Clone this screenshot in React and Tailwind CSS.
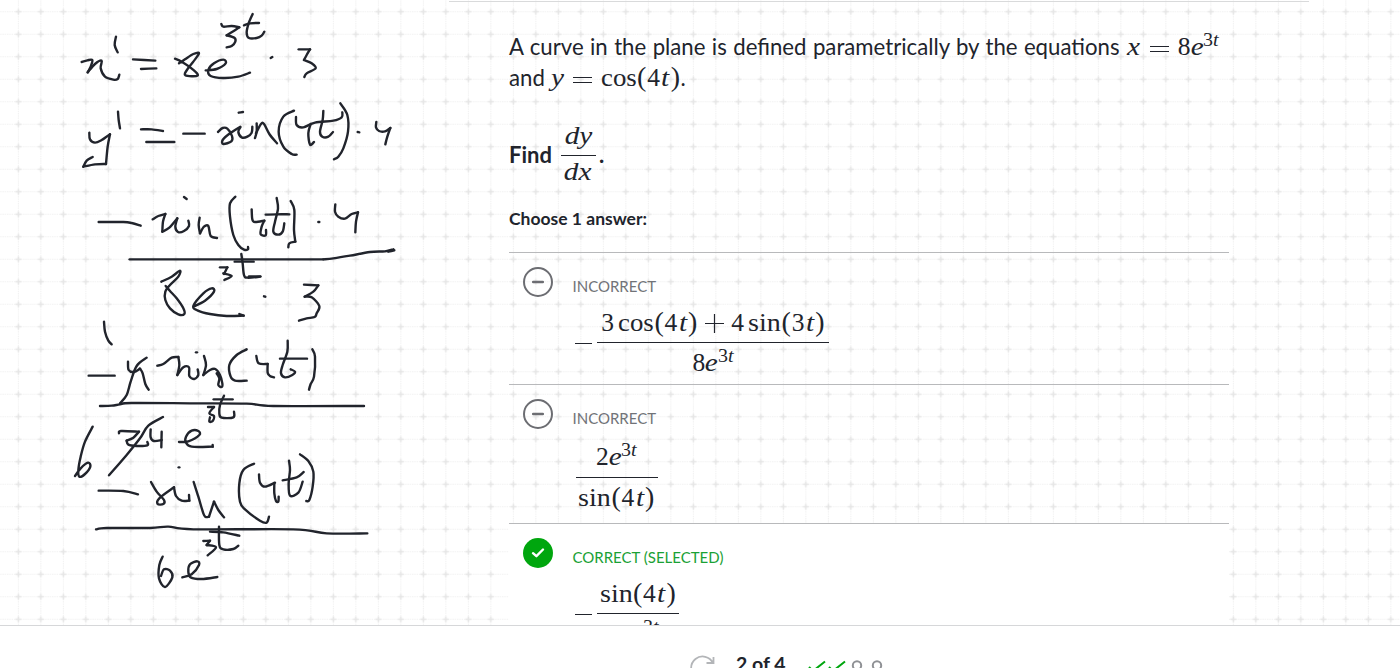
import React from "react";

// Turns a flat list of coordinates into a smooth path through all of them.
function smooth(p) {
  const n = p.length / 2;
  const at = (i) => {
    const k = Math.max(0, Math.min(n - 1, i));
    return [p[2 * k], p[2 * k + 1]];
  };
  let d = `M${p[0]} ${p[1]}`;
  for (let i = 0; i < n - 1; i++) {
    const [a, b, c, e] = [at(i - 1), at(i), at(i + 1), at(i + 2)];
    d += `C${b[0] + (c[0] - a[0]) / 6} ${b[1] + (c[1] - a[1]) / 6} ${c[0] - (e[0] - b[0]) / 6} ${c[1] - (e[1] - b[1]) / 6} ${c[0]} ${c[1]}`;
  }
  return d;
}

// Pen strokes, three units to a pixel; each group has its own vertical offset.
const ink = [
  {
    y: 0,
    strokes: [
      [65, 186, 82, 181, 97, 180, 92, 200, 83, 217],
      [83, 217, 105, 192, 125, 182, 122, 205, 135, 230, 160, 239, 173, 237, 178, 224],
      [168, 110, 164, 135, 173, 157],
      [219, 178, 286, 182],
      [243, 207, 289, 205],
      [345, 176, 365, 185, 398, 208, 413, 227, 376, 226, 382, 208, 400, 185, 417, 160, 400, 162, 375, 178, 357, 190],
      [437, 211, 470, 207, 497, 190, 490, 179, 462, 190, 445, 210, 452, 228, 490, 234, 535, 230, 570, 218],
      [484, 72, 490, 80, 515, 78, 538, 82],
      [538, 82, 520, 94, 500, 106],
      [500, 106, 523, 113, 526, 125, 515, 138, 500, 142],
      [578, 42, 566, 70, 560, 98, 567, 114, 590, 114, 605, 107, 613, 95],
      [552, 76, 570, 70, 597, 69],
      [632, 174, 637, 171],
      [716, 148, 750, 148],
      [750, 148, 740, 165, 732, 180],
      [732, 180, 755, 190, 767, 205, 740, 220, 733, 231],
      [88, 398, 90, 418, 105, 428, 125, 420, 150, 403],
      [150, 403, 143, 440, 138, 492],
      [138, 492, 105, 493, 70, 500],
      [70, 500, 80, 482, 98, 471],
      [174, 335, 176, 360, 180, 385],
      [243, 388, 275, 388, 309, 393],
      [259, 426, 343, 426],
      [370, 401, 434, 401],
      [474, 396, 488, 384, 502, 386, 516, 408, 514, 424, 490, 432, 488, 420, 510, 400, 541, 380],
      [541, 382, 535, 396, 545, 412, 562, 410, 575, 398, 577, 380],
      [536, 338, 549, 336],
      [585, 414, 590, 395, 590, 370],
      [588, 400, 603, 372, 612, 372, 628, 402, 651, 430],
      [702, 332, 670, 350, 656, 395, 670, 440, 695, 462, 710, 464],
      [708, 351, 710, 375, 730, 382, 765, 368, 820, 362, 845, 352, 847, 337],
      [752, 372, 745, 400, 750, 434, 762, 426],
      [790, 333, 788, 360, 780, 395, 787, 410, 805, 410, 819, 396],
      [841, 310, 862, 345, 864, 395, 850, 445, 835, 470, 822, 478],
      [893, 396, 898, 397],
      [949, 366, 948, 382, 957, 393, 975, 394, 991, 384],
      [991, 384, 982, 410, 976, 433],
    ],
  },
  {
    y: 180,
    strokes: [
      [116, 126, 190, 126, 215, 129, 242, 137],
      [278, 118, 295, 108, 316, 102],
      [316, 102, 309, 125, 307, 155],
      [307, 155, 328, 143, 352, 115],
      [352, 115, 346, 140, 354, 156, 372, 153, 387, 138, 385, 122],
      [372, 51, 380, 57],
      [419, 113, 416, 135, 420, 160],
      [420, 160, 432, 140, 445, 138, 452, 168, 471, 174],
      [526, 50, 510, 70, 510, 110, 520, 165, 535, 195, 552, 209, 564, 208, 564, 201],
      [575, 88, 577, 118, 585, 126, 613, 122],
      [613, 122, 605, 140, 602, 163, 617, 166, 618, 150],
      [650, 54, 654, 85, 645, 125, 640, 155, 655, 164, 668, 155, 673, 130],
      [617, 104, 650, 103, 688, 103],
      [692, 63, 703, 90, 702, 150, 706, 185],
      [706, 185, 688, 190, 685, 202],
      [775, 126, 778, 126],
      [826, 73, 825, 95, 835, 110, 855, 116, 875, 102, 894, 97],
      [894, 97, 888, 125, 886, 157],
      [209, 238, 790, 238],
      [790, 238, 820, 235, 870, 227, 930, 216, 975, 214, 1000, 208],
      [985, 215, 1003, 211],
      [480, 262, 502, 262],
      [502, 262, 492, 282],
      [490, 280, 515, 288, 493, 300],
      [544, 222, 548, 250, 552, 285, 562, 293, 601, 290],
      [524, 245, 581, 245],
      [567, 289, 601, 289],
      [304, 305, 335, 290, 360, 272, 355, 290, 330, 315, 316, 335, 316, 360, 330, 385, 355, 403, 373, 402, 370, 385, 350, 355, 330, 333, 317, 318],
      [400, 380, 435, 362, 462, 335, 455, 325, 430, 340, 400, 378, 412, 391, 450, 402, 500, 408, 551, 407],
      [538, 402, 551, 407],
      [612, 349, 616, 350],
      [732, 314, 775, 316],
      [775, 316, 760, 335, 734, 350],
      [734, 350, 755, 352, 778, 378, 770, 400, 764, 411, 740, 415, 717, 422],
    ],
  },
  {
    y: 310,
    strokes: [
      [132, 35, 135, 65, 145, 92, 155, 103],
      [86, 197, 164, 197],
      [204, 155, 206, 180, 222, 186, 240, 176],
      [240, 176, 248, 190, 256, 222, 266, 239],
      [260, 143, 230, 168, 212, 215, 200, 255, 180, 280],
      [120, 288, 155, 287, 180, 283, 215, 279, 400, 280, 560, 281, 640, 288, 912, 288],
      [292, 167, 310, 162, 335, 143, 355, 141],
      [355, 141, 358, 165, 352, 195],
      [352, 195, 370, 172, 387, 172, 388, 198, 403, 207, 415, 195, 413, 178],
      [408, 127, 411, 127],
      [432, 138, 438, 165, 430, 195],
      [430, 195, 450, 180, 466, 177, 480, 195, 487, 220, 485, 231, 475, 225, 478, 205, 470, 190],
      [560, 118, 530, 135, 508, 165, 512, 200, 525, 212, 560, 212],
      [589, 138, 596, 160, 623, 162],
      [623, 162, 623, 188, 630, 198, 642, 202],
      [683, 92, 682, 125, 668, 165, 663, 190, 675, 202, 697, 195, 705, 185, 692, 178],
      [660, 146, 741, 146],
      [757, 118, 765, 140, 762, 200, 752, 222, 747, 239],
      [444, 291, 462, 291],
      [462, 291, 448, 310, 462, 318, 458, 333, 448, 335, 450, 322],
      [492, 257, 480, 285, 478, 310, 485, 323, 520, 322, 522, 305],
      [461, 268, 518, 268],
      [177, 370, 183, 363, 237, 365],
      [237, 365, 220, 383, 200, 392],
      [200, 392, 205, 404, 230, 408, 262, 406, 262, 396],
      [309, 321, 265, 347, 240, 385, 200, 435, 147, 496],
      [272, 358, 272, 382, 282, 393, 305, 390],
      [305, 365, 304, 412],
      [357, 396, 385, 394, 418, 375, 415, 363, 395, 362, 378, 380, 378, 398, 395, 410, 458, 410],
      [458, 410, 458, 405],
      [98, 350, 75, 395, 62, 440, 55, 480, 58, 500, 75, 492, 91, 470, 84, 458, 62, 475, 45, 498],
    ],
  },
  {
    y: 440,
    strokes: [
      [116, 152, 190, 153, 234, 163],
      [273, 126, 290, 155, 312, 180, 310, 192, 293, 192, 298, 175, 342, 142],
      [342, 142, 348, 168, 365, 182, 388, 182],
      [388, 182, 387, 165],
      [356, 82, 358, 82],
      [401, 126, 415, 170, 430, 220, 437, 231, 447, 230],
      [447, 230, 462, 185],
      [462, 185, 475, 210, 492, 232],
      [582, 71, 550, 90, 538, 130, 540, 185, 555, 208, 600, 242, 620, 248, 627, 230],
      [597, 103, 600, 128, 615, 140, 645, 128],
      [643, 130, 643, 160, 648, 183, 655, 185, 656, 170],
      [687, 62, 690, 90, 686, 130, 690, 167, 715, 158, 728, 125],
      [668, 121, 710, 112, 731, 96],
      [720, 43, 745, 63, 760, 95, 758, 140, 748, 180, 739, 183],
      [108, 268, 140, 264, 270, 264, 325, 260, 400, 268, 700, 268, 800, 280, 922, 280],
      [430, 303, 450, 302],
      [450, 302, 440, 315],
      [440, 315, 468, 322, 443, 346],
      [477, 260, 478, 315, 490, 328, 520, 327, 535, 317],
      [450, 275, 490, 277, 538, 287],
      [308, 350, 298, 375, 297, 415, 315, 441, 337, 412, 330, 392, 312, 388, 303, 408],
      [367, 412, 395, 403, 417, 375, 412, 364, 390, 373, 385, 395, 392, 412, 425, 417, 472, 411],
    ],
  },
];

function Handwriting() {
  return (
    <svg className="block h-[625px] w-[449px] shrink-0" viewBox="0 0 449 625" fill="none" stroke="#21242c" strokeLinecap="round" strokeLinejoin="round">
      {ink.map((g) => (
        <g key={g.y} transform={`translate(60 ${g.y}) scale(0.33333)`} strokeWidth="7.2">
          {g.strokes.map((s, i) => (
            <path key={i} d={smooth(s)} />
          ))}
        </g>
      ))}
    </svg>
  );
}

function Grid() {
  return (
    <svg className="absolute inset-0 h-[625px] w-full" aria-hidden="true">
      <defs>
        <pattern id="cell" x="7.1" y="0.5" width="22.5" height="22.5" patternUnits="userSpaceOnUse">
          <path d="M0 11.25H22.5M11.25 0V22.5" stroke="#f1f1f1" strokeWidth="1" strokeDasharray="1.4 0.85" />
          <path d="M8.25 11.25H14.25M11.25 8.25V14.25" stroke="#e5e5e5" strokeWidth="1.5" />
        </pattern>
      </defs>
      <rect width="1400" height="625" fill="url(#cell)" />
    </svg>
  );
}

const R = ({ children }) => <span className="inline-block w-[13.3px] text-center">{children}</span>;
const I = ({ w, children }) => (
  <span className="inline-block scale-x-115 text-center italic" style={{ width: w }}>{children}</span>
);
const P = ({ children }) => <span className="inline-block w-[10.4px] text-center text-[28px] leading-none">{children}</span>;
const Fn = ({ children }) =>
  children === "sin" ? (
    <span className="inline-block w-[32.8px] origin-left scale-x-110">sin</span>
  ) : (
    <span className="inline-block w-[35.7px] origin-left scale-x-105">{children}</span>
  );
const Sup = () => (
  <span className="relative -top-[9px] inline-block w-[16px] origin-left scale-x-108 text-[18.5px] leading-none">
    3<i>t</i>
  </span>
);
const Arg = ({ n }) => (
  <>
    <P>(</P>
    <R>{n}</R>
    <I w={10}>t</I>
    <P>)</P>
  </>
);

function M({ className = "", children }) {
  return (
    <span className={`inline-flex items-baseline font-['Liberation_Serif',serif] text-[25.5px] leading-none text-[#21242c] ${className}`}>{children}</span>
  );
}

const Eq = () => (
  <svg className="mx-[9px] mb-[4px] h-[18px] w-[19px] shrink-0 self-end" viewBox="0 0 19 18" stroke="#21242c" strokeWidth="1.2">
    <path d="M0 8.5H19M0 13.5H19" />
  </svg>
);
const Plus = () => (
  <svg className="mx-[7px] mt-[3px] h-[19px] w-[19px] shrink-0 self-center" viewBox="0 0 19 19" stroke="#21242c" strokeWidth="1.2">
    <path d="M0 9.5H19M9.5 0V19" />
  </svg>
);

function Option({ label, correct, height, children }) {
  return (
    <div className={`flex border-t border-[#b8b9bb] ${height} ${correct ? "bg-white" : ""}`}>
      <div className="ml-[14px] mt-[14px] shrink-0">
        {correct ? (
          <svg className="block size-[30px]" viewBox="0 0 30 30" fill="none">
            <circle cx="15" cy="15" r="15" fill="#00a60e" />
            <path d="M10 15.2l3.4 3L20 11.5" stroke="white" strokeWidth="2.4" strokeLinecap="round" strokeLinejoin="round" />
          </svg>
        ) : (
          <svg className="block size-[30px]" viewBox="0 0 30 30" fill="none" stroke="#6c6d72" strokeWidth="2">
            <circle cx="15" cy="15" r="14" />
            <path d="M10.200 15H19.800" strokeWidth="2.5" strokeLinecap="round" />
          </svg>
        )}
      </div>
      <div className="ml-[19.5px] mt-[23px]">
        <div className={`text-[15px] leading-[20px] whitespace-nowrap ${correct ? "text-[#1aa135]" : "text-[#717378]"}`}>{label}</div>
        <div className="mt-[3px] flex">{children}</div>
      </div>
    </div>
  );
}

const Minus = () => <div className="mr-[5px] mt-[44px] ml-[2.5px] h-px w-[17px] bg-[#21242c]" />;

function Frac({ w, tall, num, den }) {
  return (
    <div className={`flex flex-col items-center ${w}`}>
      <div className={`flex items-end ${tall ? "h-[46px] pb-[8px]" : "h-[43px] pb-[6px]"}`}>{num}</div>
      <div className="h-px w-full shrink-0 bg-[#21242c]" />
      <div className={`flex items-end pb-[4px] ${tall ? "h-[37px]" : "h-[36px]"}`}>{den}</div>
    </div>
  );
}

const Sin4t = () => (
  <M>
    <Fn>sin</Fn>
    <Arg n="4" />
  </M>
);

const Exp = ({ n }) => (
  <M>
    <R>{n}</R>
    <I w={12.4}>e</I>
    <Sup />
  </M>
);

export default function App() {
  return (
    <div className="relative flex h-[668px] w-[1400px] flex-col overflow-hidden bg-white font-[Lato,sans-serif] text-[#21242c]">
      <Grid />
      <div className="relative flex h-[625px] shrink-0 overflow-hidden">
        <Handwriting />
        <main className="mt-px w-[860px] border-t border-[#d9dadb] pr-[80px] pl-[60px]">
          <div className="mt-[29px] flex h-[31px] items-baseline text-[22.2px] leading-[31px] whitespace-nowrap">
            <span className="[word-spacing:0.75px]">A curve in the plane is defined parametrically by the equations</span>
            <M className="ml-[6px]">
              <I w={15}>x</I>
              <Eq />
              <R>8</R>
              <I w={12.4}>e</I>
              <Sup />
            </M>
          </div>
          <div className="flex h-[31px] items-baseline text-[22.2px] leading-[31px] whitespace-nowrap">
            <span>and</span>
            <M className="ml-[6px]">
              <I w={13}>y</I>
              <Eq />
              <Fn>cos</Fn>
              <Arg n="4" />
            </M>
            <span>.</span>
          </div>
          <div className="mt-[24px] flex h-[76px] items-center text-[22px] font-bold">
            <span className="-mt-[2px]">Find</span>
            <div className="ml-[9px] flex w-[35px] flex-col items-center">
              <div className="flex h-[37px] items-start pt-[5px]">
                <M className="font-normal">
                  <I w={14}>d</I>
                  <I w={13.5}>y</I>
                </M>
              </div>
              <div className="h-px w-full bg-[#21242c]" />
              <div className="flex h-[37px] items-start pt-[3px]">
                <M className="font-normal">
                  <I w={14}>d</I>
                  <I w={14}>x</I>
                </M>
              </div>
            </div>
            <span className="-mt-[2px] ml-[3px]">.</span>
          </div>
          <div className="mt-[14px] h-[45px] text-[17.5px] leading-[24px] font-bold">Choose 1 answer:</div>
          <Option label="INCORRECT" height="h-[132px]">
            <Minus />
            <Frac
              w="w-[232px]"
              num={
                <M>
                  <R>3</R>
                  <span className="w-[4px]" />
                  <Fn>cos</Fn>
                  <Arg n="4" />
                  <Plus />
                  <R>4</R>
                  <span className="w-[4px]" />
                  <Fn>sin</Fn>
                  <Arg n="3" />
                </M>
              }
              den={<Exp n="8" />}
            />
          </Option>
          <Option label="INCORRECT" height="h-[139px]">
            <div className="ml-[3px]">
              <Frac w="w-[82px]" tall num={<Exp n="2" />} den={<Sin4t />} />
            </div>
          </Option>
          <Option label="CORRECT (SELECTED)" correct height="h-[180px]">
            <Minus />
            <Frac w="w-[82px]" num={<Sin4t />} den={<Exp n="6" />} />
          </Option>
        </main>
      </div>
      <footer className="relative flex h-[43px] shrink-0 items-start overflow-hidden border-t border-[#d6d7d9] bg-white pl-[689px]">
        <svg className="mt-[27px] block size-[28px]" viewBox="0 0 28 28" fill="none" stroke="#b3b5b8" strokeWidth="1.8">
          <path d="M24.500 4V10H17.500M24 10A11.500 11.500 0 1 0 24 20" />
        </svg>
        <span className="mt-[26px] ml-[19px] w-[51px] text-[19.5px] leading-[24px] font-bold whitespace-nowrap">2 of 4</span>
        <svg className="mt-[29px] ml-[21px] block h-[20px] w-[78px]" viewBox="0 0 78 20" fill="none" strokeWidth="2">
          <path d="M1 12l4 4L17 6.500M21 12l4 4L37 6.500" stroke="#00a60e" />
          <circle cx="49" cy="10.500" r="4.200" stroke="#8f9195" />
          <circle cx="69" cy="10.500" r="4.200" stroke="#8f9195" />
        </svg>
      </footer>
    </div>
  );
}
